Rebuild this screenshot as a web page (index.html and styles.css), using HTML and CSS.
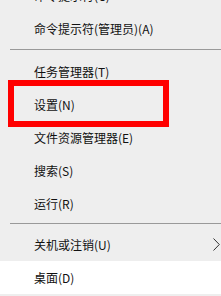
FILE: index.html
```html
<!DOCTYPE html>
<html lang="zh-CN">
<head>
  <meta charset="UTF-8">
  <title>Win+X 菜单</title>
  <link rel="stylesheet" href="styles.css">
</head>
<body>

<div class="menu">
  <div class="item">命令提示符(C)</div>
  <div class="item">命令提示符(管理员)(A)</div>
  <div class="sep sep-big"></div>
  <div class="item">任务管理器(T)</div>
  <div class="item">设置(N)</div>
  <div class="item">文件资源管理器(E)</div>
  <div class="item">搜索(S)</div>
  <div class="item">运行(R)</div>
  <div class="sep"></div>
  <div class="item sub">关机或注销(U)
    <svg class="arrow" width="7" height="13" viewBox="0 0 7 13">
      <path d="M0.5 0.5 L6.3 6.5 L0.5 12.5" fill="none" stroke="#333" stroke-width="1"/>
    </svg>
  </div>
  <div class="item active">桌面(D)</div>
</div>

<!-- 红框标注 -->
<div class="mark"></div>

</body>
</html>
```

FILE: styles.css
```css
body {
  margin: 0;
  width: 221px;
  height: 296px;
  overflow: hidden;
  background: #eeeeee;
  font-family: "Noto Sans CJK SC", "Microsoft YaHei", sans-serif;
  font-size: 12px;
  color: #111;
  position: relative;
}

.menu {
  margin-top: -21px;
}

.item {
  height: 33px;
  line-height: 33px;
  padding-left: 34px;
  display: flex;
  align-items: center;
  white-space: nowrap;
}

.item.sub {
  justify-content: space-between;
  padding-right: 1px;
}

.item.active {
  background: #ffffff;
}

.sep {
  height: 8px;
  display: flex;
  align-items: center;
  padding-left: 10px;
}

.sep::after {
  content: "";
  flex: 1;
  height: 1px;
  background: #999999;
  margin-top: -2px;
}

.sep-big {
  height: 10px;
}

.mark {
  position: absolute;
  left: 8px;
  top: 80px;
  width: 149px;
  height: 35px;
  border: 6px solid #ff0000;
}
```
